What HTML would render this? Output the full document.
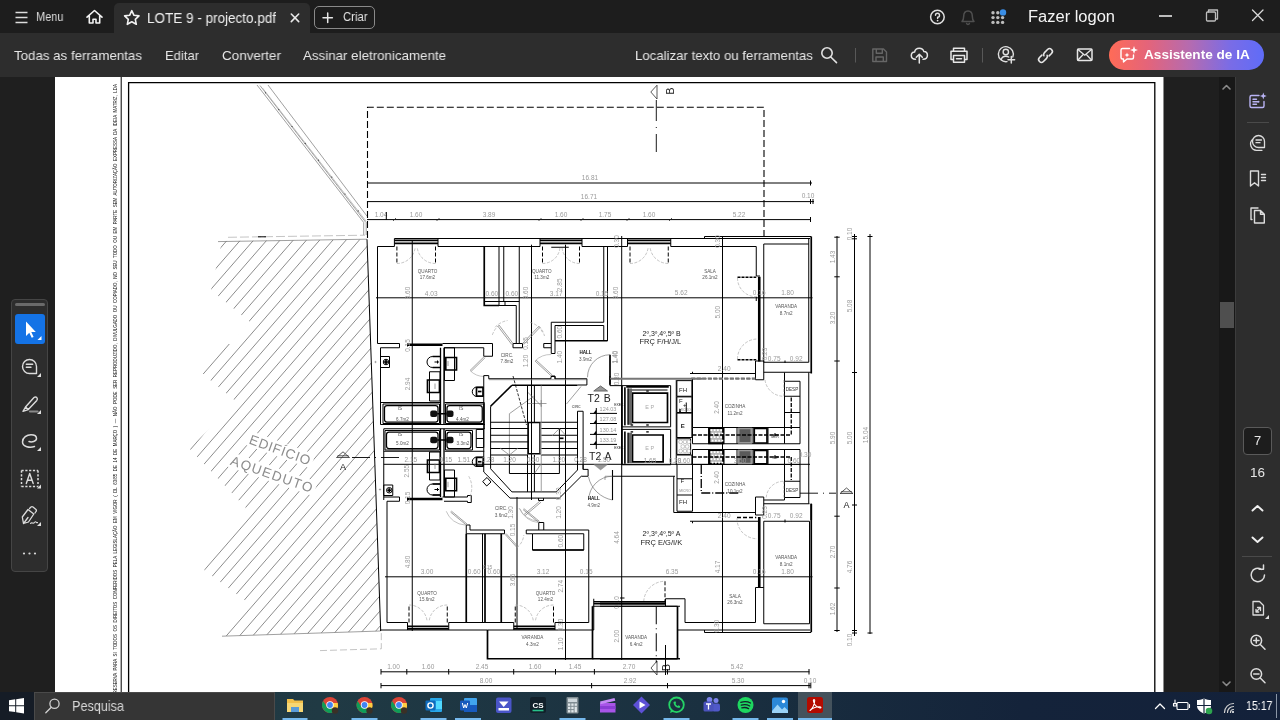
<!DOCTYPE html>
<html lang="pt">
<head>
<meta charset="utf-8">
<title>LOTE 9 - projecto.pdf</title>
<style>
html,body{margin:0;padding:0;width:1280px;height:720px;overflow:hidden;background:#1e1e1e;font-family:"Liberation Sans",sans-serif;}
#app{position:relative;width:1280px;height:720px;overflow:hidden;}
.abs{position:absolute;}
#titlebar{left:0;top:0;width:1280px;height:33px;background:#1d1d1d;}
#tab{left:114px;top:3px;width:196px;height:30px;background:#2d2d2d;border-radius:5px 5px 0 0;}
#toolbar{left:0;top:33px;width:1280px;height:44px;background:#2d2d2d;}
.t{position:absolute;white-space:nowrap;color:#e6e6e6;line-height:1;will-change:transform;}
#content{left:0;top:77px;width:1280px;height:615px;background:#1f1f1f;}
#page{left:55px;top:77px;width:1108px;height:615px;background:#fff;border-right:1px solid #8a8a8a;}
#sbtrack{left:1219px;top:77px;width:16px;height:615px;background:#181818;}
#sbthumb{left:1220px;top:302px;width:14px;height:26px;background:#4f4f4f;}
#rpanel{left:1235px;top:77px;width:45px;height:615px;background:#2d2d2d;border-left:1px solid #3c3c3c;box-sizing:border-box;}
#ltools{left:11px;top:299px;width:37px;height:273px;background:#2d2d2d;border:1px solid #454545;border-radius:4px;box-sizing:border-box;}
#taskbar{left:0;top:692px;width:1280px;height:28px;background:linear-gradient(90deg,#22343c 0,#203a44 25%,#1a3040 55%,#14233a 80%,#13213a 100%);}
#start{left:0;top:692px;width:34px;height:28px;background:#151c26;}
#search{left:34px;top:692px;width:241px;height:28px;background:#353535;border:1px solid #4a4a4a;border-bottom:none;box-sizing:border-box;}
svg{position:absolute;left:0;top:0;overflow:visible;will-change:transform;}
</style>
</head>
<body>
<div id="app">
<div id="content" class="abs"></div>
<div id="page" class="abs"></div>
<!--PLAN-->
<svg width="1280" height="720" viewBox="0 0 1280 720" style="font-family:'Liberation Sans',sans-serif">
<style>
path,circle,rect,ellipse{vector-effect:non-scaling-stroke}
.sk{stroke:#000;stroke-width:1.7;fill:none}
.sx{stroke:#000;stroke-width:2.6;fill:none}
.sm{stroke:#000;stroke-width:1;fill:none}
.st{stroke:#222;stroke-width:.75;fill:none}
.sg{stroke:#777;stroke-width:.7;fill:none}
.slg{stroke:#aaa;stroke-width:.7;fill:none}
.sh{stroke:#666;stroke-width:.75;fill:none}
.sd{fill:#9a9a9a;font-size:6.5px}
.sr{fill:#555;font-size:4.6px}
.sb{fill:#222;font-size:9px}
</style>
<defs><clipPath id="pg"><rect x="55" y="77" width="1108" height="615"/></clipPath>
<clipPath id="hc"><path d="M222 241 L211 290 L250 322 L204 375 L238 403 L189 448 L246 508 L204 570 L246 601 L222 636 L380.4 631 L367 239.5Z"/></clipPath></defs>
<g clip-path="url(#pg)">
<path class="sm" d="M121.2 77L121.2 692" />
<path class="sm" d="M128.6 692V82.6H1154.8V692" style="stroke-width:1.3"/>
<text x="117.3" y="731.2" transform="rotate(-90 117.3 731.2)" font-size="4.5" fill="#111" word-spacing="1.4" textLength="647.2" lengthAdjust="spacing">A IDEIA MATRIZ RESERVA PARA SI TODOS OS DIREITOS CONFERIDOS PELA LEGISLAÇÃO EM VIGOR ( DL 63/85 DE 14 DE MARÇO ) — NÃO PODE SER REPRODUZIDO, DIVULGADO OU COPIADO, NO SEU TODO OU EM PARTE SEM AUTORIZAÇÃO EXPRESSA DA IDEIA MATRIZ, LDA</text>
<path class="sg" d="M257 85L363.7 222.5V235" />
<path class="sg" d="M260 85.5L365.5 222" />
<path class="slg" d="M262.5 88L366 221" />
<path class="sg" d="M268 85L367.3 216.5" />
<path class="sg" d="M366.2 222V235" />
<circle cx="265.5" cy="92.8" r=".6" fill="#333"/>
<circle cx="278.8" cy="109.6" r=".6" fill="#333"/>
<circle cx="292.0" cy="126.5" r=".6" fill="#333"/>
<circle cx="305.2" cy="143.4" r=".6" fill="#333"/>
<circle cx="318.5" cy="160.2" r=".6" fill="#333"/>
<circle cx="331.8" cy="177.1" r=".6" fill="#333"/>
<circle cx="345.0" cy="194.0" r=".6" fill="#333"/>
<circle cx="358.2" cy="210.9" r=".6" fill="#333"/>
<path class="sm" d="M367.5 238V107.3H764V237" stroke-dasharray="7 3" style="stroke-width:1.1"/>
<path class="st" d="M657 85.2L650.8 92L657 99Z" />
<text class="sb" x="674" y="91" text-anchor="middle" transform="rotate(-90 674 91)" style="font-size:11px">B</text>
<path class="sm" d="M656.3 100V152" stroke-dasharray="21 6 1 6" style="stroke-width:.9"/>
<g clip-path="url(#hc)">
<path class="sh" d="M177.9 221L-239.5 701" />
<path class="sh" d="M191.1 221L-226.3 701" />
<path class="sh" d="M204.3 221L-213.1 701" />
<path class="sh" d="M217.5 221L-199.9 701" />
<path class="sh" d="M230.7 221L-186.7 701" />
<path class="sh" d="M243.9 221L-173.5 701" />
<path class="sh" d="M257.1 221L-160.3 701" />
<path class="sh" d="M270.3 221L-147.1 701" />
<path class="sh" d="M283.5 221L-133.9 701" />
<path class="sh" d="M296.7 221L-120.7 701" />
<path class="sh" d="M309.9 221L-107.5 701" />
<path class="sh" d="M323.1 221L-94.3 701" />
<path class="sh" d="M336.3 221L-81.1 701" />
<path class="sh" d="M349.5 221L-67.9 701" />
<path class="sh" d="M362.7 221L-54.7 701" />
<path class="sh" d="M375.9 221L-41.5 701" />
<path class="sh" d="M389.1 221L-28.3 701" />
<path class="sh" d="M402.3 221L-15.1 701" />
<path class="sh" d="M415.5 221L-1.9 701" />
<path class="sh" d="M428.7 221L11.3 701" />
<path class="sh" d="M441.9 221L24.5 701" />
<path class="sh" d="M455.1 221L37.7 701" />
<path class="sh" d="M468.3 221L50.9 701" />
<path class="sh" d="M481.5 221L64.1 701" />
<path class="sh" d="M494.7 221L77.3 701" />
<path class="sh" d="M507.9 221L90.5 701" />
<path class="sh" d="M521.1 221L103.7 701" />
<path class="sh" d="M534.3 221L116.9 701" />
<path class="sh" d="M547.5 221L130.1 701" />
<path class="sh" d="M560.7 221L143.3 701" />
<path class="sh" d="M573.9 221L156.5 701" />
<path class="sh" d="M587.1 221L169.7 701" />
<path class="sh" d="M600.3 221L182.9 701" />
<path class="sh" d="M613.5 221L196.1 701" />
<path class="sh" d="M626.7 221L209.3 701" />
<path class="sh" d="M639.9 221L222.5 701" />
<path class="sh" d="M653.1 221L235.7 701" />
<path class="sh" d="M666.3 221L248.9 701" />
<path class="sh" d="M679.5 221L262.1 701" />
<path class="sh" d="M692.7 221L275.3 701" />
<path class="sh" d="M705.9 221L288.5 701" />
<path class="sh" d="M719.1 221L301.7 701" />
<path class="sh" d="M732.3 221L314.9 701" />
<path class="sh" d="M745.5 221L328.1 701" />
<path class="sh" d="M758.7 221L341.3 701" />
<path class="sh" d="M771.9 221L354.5 701" />
<path class="sh" d="M785.1 221L367.7 701" />
<path class="sh" d="M798.3 221L380.9 701" />
<path class="sh" d="M811.5 221L394.1 701" />
<path class="sh" d="M824.7 221L407.3 701" />
<path class="sh" d="M837.9 221L420.5 701" />
<path class="sh" d="M851.1 221L433.7 701" />
<path class="sh" d="M864.3 221L446.9 701" />
<path class="sh" d="M877.5 221L460.1 701" />
<path class="sh" d="M890.7 221L473.3 701" />
</g>
<path class="sh" d="M229.3 344L203.2 374" />
<path class="sg" d="M218 241.6L367 239.2" />
<path class="slg" d="M228 237.3L365 235.2" stroke-dasharray="9 3"/>
<path class="sm" d="M258 236.8h8" />
<path class="sg" d="M222 636.2L380.5 631" />
<path class="slg" d="M320 650.6L381.3 648.8V631" stroke-dasharray="7 3"/>
<g transform="rotate(20 248.2 443.3)"><rect x="245.2" y="430.8" width="70" height="15" fill="#fff"/><text x="248.2" y="443.3" font-size="13.5" fill="#8c8c8c" letter-spacing=".8">EDIFÍCIO</text></g>
<g transform="rotate(19.1 229.6 464.6)"><rect x="226.6" y="452.1" width="92" height="15" fill="#fff"/><text x="229.6" y="464.6" font-size="13.5" fill="#8c8c8c" letter-spacing="1.35">AQUEDUTO</text></g>
<path class="sm" d="M367 239.3L380.7 631" />
<path class="st" d="M336.5 457.5L343 451.8L349.5 457.5Z M337.5 455.8h11" />
<text class="sb" x="343" y="469.5" text-anchor="middle" >A</text>
<path class="sm" d="M352 457.5H404" stroke-dasharray="18 5 1 5" style="stroke-width:.9"/>
<path class="sm" d="M367 183L812 183" />
<path class="sm" d="M367 201.6L814 201.6" />
<path class="sm" d="M367 219.6L811 219.6" />
<text class="sd" x="590" y="180" text-anchor="middle" >16.81</text>
<text class="sd" x="589" y="198.5" text-anchor="middle" >16.71</text>
<text class="sd" x="808" y="198" text-anchor="middle" >0.10</text>
<text class="sd" x="381" y="217" text-anchor="middle" >1.04</text>
<text class="sd" x="416" y="217" text-anchor="middle" >1.60</text>
<text class="sd" x="489" y="217" text-anchor="middle" >3.89</text>
<text class="sd" x="561" y="217" text-anchor="middle" >1.60</text>
<text class="sd" x="605" y="217" text-anchor="middle" >1.75</text>
<text class="sd" x="649" y="217" text-anchor="middle" >1.60</text>
<text class="sd" x="739" y="217" text-anchor="middle" >5.22</text>
<path class="st" d="M393.0 221L396.0 218" />
<path class="st" d="M436.5 221L439.5 218" />
<path class="st" d="M538.5 221L541.5 218" />
<path class="st" d="M580.5 221L583.5 218" />
<path class="st" d="M626.5 221L629.5 218" />
<path class="st" d="M669.0 221L672.0 218" />
<path class="sm" d="M386.3 212L386.3 220" />
<path class="sm" d="M810.5 180.5v5M810.5 199v5M810.5 217v5" />
<path class="sm" d="M813 199v5" />
<path class="sm" d="M381 671.8L809.5 671.8" />
<path class="sm" d="M381 685.6L810.5 685.6" />
<path class="sm" d="M381 669L381 674.5" />
<path class="sm" d="M406.8 669L406.8 674.5" />
<path class="sm" d="M448.7 669L448.7 674.5" />
<path class="sm" d="M513.7 669L513.7 674.5" />
<path class="sm" d="M555.5 669L555.5 674.5" />
<path class="sm" d="M594.4 669L594.4 674.5" />
<path class="sm" d="M667.5 669L667.5 674.5" />
<path class="sm" d="M809 669L809 674.5" />
<path class="sm" d="M381 683L381 688.3" />
<path class="sm" d="M591.6 683L591.6 688.3" />
<path class="sm" d="M667.5 683L667.5 688.3" />
<path class="sm" d="M809 683L809 688.3" />
<path class="sm" d="M810.8 683L810.8 688.3" />
<text class="sd" x="393.5" y="669" text-anchor="middle" >1.00</text>
<text class="sd" x="428" y="669" text-anchor="middle" >1.60</text>
<text class="sd" x="482" y="669" text-anchor="middle" >2.45</text>
<text class="sd" x="535" y="669" text-anchor="middle" >1.60</text>
<text class="sd" x="575" y="669" text-anchor="middle" >1.45</text>
<text class="sd" x="629" y="669" text-anchor="middle" >2.70</text>
<text class="sd" x="737" y="669" text-anchor="middle" >5.42</text>
<text class="sd" x="486" y="683" text-anchor="middle" >8.00</text>
<text class="sd" x="630" y="683" text-anchor="middle" >2.92</text>
<text class="sd" x="738" y="683" text-anchor="middle" >5.30</text>
<text class="sd" x="810" y="683" text-anchor="middle" >0.10</text>
<path class="st" d="M897.5 0" />
<path class="st" d="M657 661L651 668L657 675Z" />
<text class="sb" x="670" y="667.5" text-anchor="middle" transform="rotate(-90 670 667.5)" style="font-size:11px">B</text>
<path class="sm" d="M837 236L837 632" />
<path class="sm" d="M854.5 234L854.5 636" />
<path class="sm" d="M870 234L870 634" />
<path class="sm" d="M834.3 237.2L839.7 237.2" />
<path class="sm" d="M834.3 276.8L839.7 276.8" />
<path class="sm" d="M834.3 361L839.7 361" />
<path class="sm" d="M834.3 516.2L839.7 516.2" />
<path class="sm" d="M834.3 588L839.7 588" />
<path class="sm" d="M834.3 630.5L839.7 630.5" />
<path class="sm" d="M852 236.5L857 236.5" />
<path class="sm" d="M852 238.8L857 238.8" />
<path class="sm" d="M852 372.5L857 372.5" />
<path class="sm" d="M852 505L857 505" />
<path class="sm" d="M852 630.5L857 630.5" />
<path class="sm" d="M852 633L857 633" />
<path class="sm" d="M867.5 236.5L872.5 236.5" />
<path class="sm" d="M867.5 633L872.5 633" />
<text class="sd" x="834.5" y="257" text-anchor="middle" transform="rotate(-90 834.5 257)" >1.43</text>
<text class="sd" x="834.5" y="318" text-anchor="middle" transform="rotate(-90 834.5 318)" >3.20</text>
<text class="sd" x="834.5" y="438" text-anchor="middle" transform="rotate(-90 834.5 438)" >5.90</text>
<text class="sd" x="834.5" y="552" text-anchor="middle" transform="rotate(-90 834.5 552)" >2.70</text>
<text class="sd" x="834.5" y="609" text-anchor="middle" transform="rotate(-90 834.5 609)" >1.62</text>
<text class="sd" x="852" y="306" text-anchor="middle" transform="rotate(-90 852 306)" >5.08</text>
<text class="sd" x="852" y="438" text-anchor="middle" transform="rotate(-90 852 438)" >5.00</text>
<text class="sd" x="852" y="567" text-anchor="middle" transform="rotate(-90 852 567)" >4.76</text>
<text class="sd" x="852" y="234" text-anchor="middle" transform="rotate(-90 852 234)" >0.10</text>
<text class="sd" x="852" y="640" text-anchor="middle" transform="rotate(-90 852 640)" >0.10</text>
<text class="sd" x="867.5" y="435" text-anchor="middle" transform="rotate(-90 867.5 435)" >15.04</text>
<path class="st" d="M840 493.5L846.5 488L853 493.5Z M841 491.8h11" />
<text class="sb" x="846.5" y="508" text-anchor="middle" >A</text>
<path class="sm" d="M800 493.2H836" stroke-dasharray="18 5 1 5" style="stroke-width:.9"/>
<path class="sm" d="M394.4 238.5L810 238.5" />
<path class="sm" d="M377.5 246.5L394.4 246.5" />
<path class="sm" d="M438 246.5L540 246.5" />
<path class="sm" d="M582 246.5L627.5 246.5" />
<path class="sm" d="M670.75 246.5L756.25 246.5" />
<path class="sm" d="M394.4 238.5V246.5M438 238.5V246.5" />
<path class="sk" d="M394.4 240.4L438 240.4" />
<path class="sk" d="M394.4 243.4L438 243.4" />
<path class="sm" d="M396.9 246.5V263.5M435.5 246.5V263.5" stroke-dasharray="4 2"/>
<path class="slg" d="M396.9 263.5A18.30000000000001 18.30000000000001 0 0 0 415.2 247.5M435.5 263.5A18.30000000000001 18.30000000000001 0 0 1 417.2 247.5" stroke-dasharray="3 1.5"/>
<path class="sm" d="M540 238.5V246.5M582 238.5V246.5" />
<path class="sk" d="M540 240.4L582 240.4" />
<path class="sk" d="M540 243.4L582 243.4" />
<path class="sm" d="M542.5 246.5V263.5M579.5 246.5V263.5" stroke-dasharray="4 2"/>
<path class="slg" d="M542.5 263.5A17.5 17.5 0 0 0 560.0 247.5M579.5 263.5A17.5 17.5 0 0 1 562.0 247.5" stroke-dasharray="3 1.5"/>
<path class="sm" d="M627.5 238.5V246.5M670.75 238.5V246.5" />
<path class="sk" d="M627.5 240.4L670.75 240.4" />
<path class="sk" d="M627.5 243.4L670.75 243.4" />
<path class="sm" d="M630.0 246.5V263.5M668.25 246.5V263.5" stroke-dasharray="4 2"/>
<path class="slg" d="M630.0 263.5A18.125 18.125 0 0 0 648.125 247.5M668.25 263.5A18.125 18.125 0 0 1 650.125 247.5" stroke-dasharray="3 1.5"/>
<path class="sm" d="M376 297.8L812.5 297.8" />
<path class="sm" d="M383.7 464.3L810 464.3" />
<path class="sm" d="M385 576.8L812.5 576.8" />
<path class="sm" d="M412.25 241L412.25 631" />
<path class="sm" d="M531.5 244.7L531.5 500" />
<path class="sm" d="M517 497L517 629" />
<path class="sm" d="M565.5 244.7L565.5 660" />
<path class="sm" d="M621.7 236L621.7 660" />
<path class="sm" d="M722.5 236.5L722.5 632.5" />
<g transform="translate(360 226) scale(0.25)">
<path class="sm" d="M70 82V470H158V487H82V720" />
<path class="sx" d="M190 475H330" />
<path class="sm" d="M190 470V482" />
<path class="sm" d="M330 470H530V521H495V487H336" />
<path class="sk" d="M497 82V318H556" />
<path class="sm" d="M497 302H556M556 82V318H580V302H556M575 82V302M580 302H637M580 318H625V470M637 82V470" />
<path class="sm" d="M612 470H650V487H612Z" />
<path class="sm" d="M975 82V385H765V510H780V398H975V458M990 82V460" />
<path class="sk" d="M780 459H990" />
<path class="sm" d="M765 470H735V487H765" />
<path class="sm" d="M765 85H835" />
<path class="sm" d="M322 487V720M336 487V720" style="stroke-width:1.3"/>
<path class="sm" d="M82 522H118V566H82Z" />
<circle cx="104" cy="544" r="11" class="sm"/>
<path class="sk" d="M96 544H112M104 536V552" />
<circle cx="62" cy="544" r="2.5" class="sg"/>
<path class="sm" d="M320 522H290A22 22 0 0 0 290 566H320" />
<path class="sk" d="M290 522H320M290 566H320" />
<path class="sm" d="M298 544H316M310 538V550" />
<path class="sm" d="M278 583H320V700H278Z" />
<path class="sk" d="M270 616H318V666H270Z" />
<path class="sg" d="M300 630V652" />
<path class="sm" d="M338 487H378V618H338Z" />
<path class="sk" d="M343 526H386V576H343Z" />
<path class="sg" d="M352 540V560" />
<path class="sm" d="M493 644H468A18 18 0 0 0 468 682H493" />
<path class="sk" d="M466 646H492V680H466Z" />
<path class="sk" d="M472 662H486" />
<path class="sg" d="M612 470L556 396M607 474L551 400" />
<path class="slg" d="M556 396A92 92 0 0 0 528 440" stroke-dasharray="3 1.5"/>
<path class="slg" d="M540 405A92 92 0 0 1 590 378" stroke-dasharray="3 1.5"/>
<path class="sg" d="M650 470L716 400M655 474L721 404" />
<path class="slg" d="M716 400A92 92 0 0 1 738 440" stroke-dasharray="3 1.5"/>
<path class="slg" d="M680 385A80 80 0 0 1 730 425" stroke-dasharray="3 1.5"/>
<path class="sg" d="M497 522L440 578M501 526L444 582" />
<path class="slg" d="M440 578A80 80 0 0 0 497 602" />
<path class="sg" d="M765 600L700 540M769 596L704 536" />
<path class="slg" d="M700 540A88 88 0 0 1 765 514" />
<path class="sm" d="M765 600H780V612" />
<path class="sk" d="M1000 515V635" />
<path class="sg" d="M1000 515A90 90 0 0 0 910 605" />
<path d="M935 660L962 640L990 660Z" fill="#999" stroke="#666" stroke-width="1"/>
</g>
<text class="sr" x="427.5" y="272.8" text-anchor="middle" >QUARTO</text>
<text class="sr" x="427.5" y="279.2" text-anchor="middle" >17.6m2</text>
<text class="sr" x="541.8" y="272.8" text-anchor="middle" >QUARTO</text>
<text class="sr" x="541.8" y="279.2" text-anchor="middle" >11.3m2</text>
<text class="sd" x="431.2" y="295.5" text-anchor="middle" >4.03</text>
<text class="sd" x="491.8" y="295.5" text-anchor="middle" >0.60</text>
<text class="sd" x="511.8" y="295.5" text-anchor="middle" >0.60</text>
<text class="sd" x="556.2" y="295.5" text-anchor="middle" >3.17</text>
<text class="sd" x="602.0" y="295.5" text-anchor="middle" >0.15</text>
<text class="sd" x="409.5" y="293.0" text-anchor="middle" transform="rotate(-90 409.5 293.0)" >3.60</text>
<text class="sd" x="562.5" y="284.8" text-anchor="middle" transform="rotate(-90 562.5 284.8)" >2.85</text>
<text class="sd" x="617.5" y="293.0" text-anchor="middle" transform="rotate(-90 617.5 293.0)" >3.60</text>
<text class="sd" x="528.0" y="293.0" text-anchor="middle" transform="rotate(-90 528.0 293.0)" >3.60</text>
<text class="sd" x="562.0" y="332.2" text-anchor="middle" transform="rotate(-90 562.0 332.2)" >0.60</text>
<text class="sd" x="562.0" y="357.2" text-anchor="middle" transform="rotate(-90 562.0 357.2)" >1.40</text>
<text class="sd" x="617.5" y="357.2" text-anchor="middle" transform="rotate(-90 617.5 357.2)" >1.40</text>
<text class="sd" x="528.0" y="361.0" text-anchor="middle" transform="rotate(-90 528.0 361.0)" >1.20</text>
<text class="sd" x="409.5" y="384.0" text-anchor="middle" transform="rotate(-90 409.5 384.0)" >2.94</text>
<text class="sd" x="528.0" y="343.5" text-anchor="middle" transform="rotate(-90 528.0 343.5)" >0.15</text>
<text class="sd" x="409.5" y="345.5" text-anchor="middle" transform="rotate(-90 409.5 345.5)" >0.15</text>
<text class="sr" x="507.0" y="356.5" text-anchor="middle" >CIRC.</text>
<text class="sr" x="507.0" y="363.0" text-anchor="middle" >7.8m2</text>
<text class="sr" x="585.5" y="354.2" text-anchor="middle" transform="rotate( 585.5 354.2)" style="fill:#111;font-weight:bold">HALL</text>
<text class="sr" x="585.5" y="361.0" text-anchor="middle" >3.9m2</text>
<text class="sb" x="599.2" y="401.5" text-anchor="middle" style="font-size:10.5px;word-spacing:1px">T2 B</text>
<text class="sb" x="642.5" y="336.0" text-anchor="start" style="font-size:7px">2º,3º,4º,5º B</text>
<text class="sb" x="639.5" y="343.5" text-anchor="start" style="font-size:7.5px">FRÇ F/H/J/L</text>
<g transform="translate(600 226) scale(0.25)">
<path class="sm" d="M418 50V42H845" />
<path class="sk" d="M845 42V590" />
<path class="sm" d="M835 50V72M835 72V545" />
<path class="sm" d="M625 82V200H640" />
<path class="sx" d="M637 203V542" />
<path class="sm" d="M655 72V545M655 72H835M655 545H835M655 585H845" />
<path class="sm" d="M622 540H655V615H622Z" />
<path class="sm" d="M360 590H622" />
<path class="sm" d="M370 583V590" />
<path class="sm" d="M40 610H365" />
<path class="sg" d="M365 610H622" stroke-dasharray="4 1.5" style="stroke-width:1.8;stroke:#666"/>
<path class="sm" d="M40 600V612" />
<path class="sk" d="M550 205H625" stroke-dasharray="3 1"/>
<path class="slg" d="M550 208A75 75 0 0 0 625 283" stroke-dasharray="3 1.5"/>
<path class="sk" d="M550 535H625" stroke-dasharray="3 1"/>
<path class="slg" d="M550 532A80 80 0 0 1 630 452" stroke-dasharray="3 1.5"/>
<path class="sm" d="M740 538V548" />
<path class="sm" d="M625 283V300" />
</g>
<text class="sr" x="710.0" y="272.8" text-anchor="middle" >SALA</text>
<text class="sr" x="710.0" y="279.2" text-anchor="middle" >26.1m2</text>
<text class="sr" x="786.2" y="308.0" text-anchor="middle" >VARANDA</text>
<text class="sr" x="786.2" y="314.5" text-anchor="middle" >8.7m2</text>
<text class="sd" x="681.2" y="295.0" text-anchor="middle" >5.62</text>
<text class="sd" x="759.2" y="295.0" text-anchor="middle" >0.16</text>
<text class="sd" x="787.5" y="295.0" text-anchor="middle" >1.80</text>
<text class="sd" x="724.2" y="370.8" text-anchor="middle" >2.40</text>
<text class="sd" x="774.2" y="360.5" text-anchor="middle" >0.75</text>
<text class="sd" x="796.2" y="360.5" text-anchor="middle" >0.92</text>
<text class="sd" x="720.5" y="312.2" text-anchor="middle" transform="rotate(-90 720.5 312.2)" >5.00</text>
<text class="sd" x="618.5" y="241.5" text-anchor="middle" transform="rotate(-90 618.5 241.5)" >0.30</text>
<text class="sd" x="720.0" y="241.5" text-anchor="middle" transform="rotate(-90 720.0 241.5)" >0.30</text>
<text class="sd" x="618.5" y="357.2" text-anchor="middle" transform="rotate(-90 618.5 357.2)" >1.40</text>
<text class="sd" x="618.5" y="379.0" text-anchor="middle" transform="rotate(-90 618.5 379.0)" >0.30</text>
<text class="sd" x="767.0" y="354.0" text-anchor="middle" transform="rotate(-90 767.0 354.0)" >0.23</text>
<g transform="translate(360 340) scale(0.25)">
<path class="sm" d="M82 264V338M82 250H322M338 250H497" />
<path class="sm" d="M92 256H318V334H92Z" />
<rect x="98" y="262" width="214" height="66" rx="10" class="sm" style="stroke-width:1.25"/>
<path class="sm" d="M342 256H495V334H342Z" />
<rect x="348" y="262" width="141" height="66" rx="10" class="sm" style="stroke-width:1.25"/>
<path class="sm" d="M322 264V338M336 264V338" style="stroke-width:1.3"/>
<rect x="281" y="282" width="28" height="26" rx="8" fill="#111"/>
<rect x="346" y="282" width="28" height="26" rx="8" fill="#111"/>
<rect x="281" y="387" width="28" height="26" rx="8" fill="#111"/>
<rect x="346" y="387" width="28" height="26" rx="8" fill="#111"/>
<path class="sk" d="M309 295H346M309 400H346" />
<path class="sm" d="M82 338H500M95 355H500" />
<path class="sm" d="M497 250V355" />
<path class="sm" d="M95 355V640" />
<path class="sm" d="M100 362H318V440H100Z" />
<rect x="106" y="368" width="206" height="66" rx="10" class="sm" style="stroke-width:1.25"/>
<path class="sm" d="M342 362H450V440H342Z" />
<rect x="348" y="368" width="96" height="66" rx="10" class="sm" style="stroke-width:1.25"/>
<path class="sm" d="M322 355V628M336 355V628" style="stroke-width:1.3"/>
<path class="sm" d="M465 358H495V430H465Z" />
<path class="sm" d="M465 394H495" />
<path class="sm" d="M95 445H322M338 445H497" />
<path class="sm" d="M278 448H320V560H278Z" />
<path class="sk" d="M270 480H318V530H270Z" />
<path class="sg" d="M300 494V516" />
<path class="sm" d="M320 576H290A22 22 0 0 0 290 620H320" />
<path class="sk" d="M290 576H320M290 620H320" />
<path class="sm" d="M298 598H316M310 592V604" />
<path class="sm" d="M95 580H131V622H95Z" />
<circle cx="117" cy="601" r="11" class="sm"/>
<path class="sk" d="M109 601H125M117 593V609" />
<circle cx="80" cy="598" r="2.5" class="sg"/>
<path class="sm" d="M338 520H378V628H338Z" />
<path class="sk" d="M343 553H386V603H343Z" />
<path class="sg" d="M352 567V589" />
<path class="sm" d="M493 468H468A18 18 0 0 0 468 506H493" />
<path class="sk" d="M466 470H492V504H466Z" />
<path class="sk" d="M472 487H486" />
<path class="sm" d="M95 628H158V645H108V720" />
<path class="sx" d="M190 636H330" />
<path class="sm" d="M190 630V643" />
<path class="sm" d="M330 628H430V622H445V650H430V645H336" />
<path class="slg" d="M435 545A90 90 0 0 1 440 625" stroke-dasharray="3 1.5"/>
<path class="sg" d="M1010 545A95 95 0 0 0 915 640" />
</g>
<path class="sm" d="M483.75 406V375.6H488.75V378.75H551V376.5H555V378.75H586.9V385H577.5" />
<path class="sg" d="M488.75 379.7L586 379.7" />
<path class="sk" d="M511.9 385.25H577.5" />
<path class="sk" d="M511.9 385.25L490.6 406.25" />
<path class="sg" d="M581 386.5L566.5 404" />
<path class="sm" d="M483.75 406V472L510 498.1H559.4L581.25 476.25H588.1V469.4H583.1V464.3" />
<path class="sm" d="M490.6 406.25V468.75L511.9 491.9H556.25L577.5 470V411.25" />
<path class="sm" d="M482.7 481.5L487 477.5L491 482L486.7 486Z" />
<path class="sm" d="M577.5 411.25H583.1V469.4" />
<path class="sg" d="M533.7 396.2L509.4 413.7V455" />
<path class="sg" d="M527.5 392L541 405.5" />
<path class="sg" d="M527.5 403.5H546.5M541.2 400V407" />
<path class="sm" d="M527.5 385.25V422.5M534.4 385.25V422.5" />
<path class="sg" d="M541.25 385.25V422.5" />
<path class="sm" d="M527.5 455V491.9M534.4 455V491.9" />
<path class="sg" d="M541.25 455V491.9" />
<path class="sg" d="M534.4 473.5L541 464" />
<path class="sm" d="M490.6 422.25L528 422.25" />
<path class="sm" d="M541.25 422.25L577.5 422.25" />
<path class="sm" d="M490.6 428.5L528 428.5" />
<path class="sm" d="M541.25 428.5L577.5 428.5" />
<path class="sm" d="M490.6 435.25L528 435.25" />
<path class="sm" d="M541.25 435.25L577.5 435.25" />
<path class="sm" d="M490.6 441.9L528 441.9" />
<path class="sm" d="M541.25 441.9L577.5 441.9" />
<path class="sm" d="M490.6 448.5L528 448.5" />
<path class="sm" d="M541.25 448.5L577.5 448.5" />
<path class="sm" d="M490.6 455L528 455" />
<path class="sm" d="M541.25 455L577.5 455" />
<path class="sk" d="M528.1 422.5H540V453.75H528.1Z" />
<path class="sg" d="M540.6 422.5V453.75" style="stroke-width:1.6"/>
<path class="sm" d="M509.4 455V473.5H559.4V428.5" />
<path class="sg" d="M552 436L559.4 428.5L565 434.5" />
<path class="sg" d="M500 448L509.4 455L518 448" />
<path class="sk" d="M559 438.3H563.5" />
<path class="sm" d="M513 376L526.5 425" stroke-dasharray="3 1.5" style="stroke-width:.8"/>
<path class="sm" d="M590 413.4L617 413.4" />
<path d="M596.3 413.4L593 413.7L596.3 409.4Z" fill="#000"/>
<path class="sm" d="M590 423.5L617 423.5" />
<path d="M596.3 423.5L593 423.8L596.3 419.5Z" fill="#000"/>
<path class="sm" d="M590 434.4L617 434.4" />
<path d="M596.3 434.4L593 434.7L596.3 430.4Z" fill="#000"/>
<path class="sm" d="M590 444.4L617 444.4" />
<path d="M596.3 444.4L593 444.7L596.3 440.4Z" fill="#000"/>
<path class="sm" d="M596.3 408L596.3 449" />
<text class="sd" x="608" y="411.3" text-anchor="middle" style="font-size:5.5px">124.03</text>
<text class="sd" x="608" y="421.4" text-anchor="middle" style="font-size:5.5px">127.08</text>
<text class="sd" x="608" y="432.3" text-anchor="middle" style="font-size:5.5px">130.14</text>
<text class="sd" x="608" y="442.3" text-anchor="middle" style="font-size:5.5px">133.19</text>
<path d="M593.75 464.6H607.5L600.6 470Z" fill="#999" stroke="#666" stroke-width=".3"/>
<text class="sb" x="600.3" y="460.3" text-anchor="middle" style="font-size:10.5px;word-spacing:1px">T2 A</text>
<path class="sg" d="M612.5 470V500" style="stroke-width:1.2"/>
<path class="sg" d="M612.5 500A30 30 0 0 1 588.5 477" />
<path class="sm" d="M612.5 470V476.25H621.7" />
<path class="sg" d="M540 501L524 514.5M541 502.2L525 515.7" />
<path class="slg" d="M519 508A22 22 0 0 0 539 521" />
<path class="sm" d="M538.5 498.1V500.5H543.5V498.1" />
<text class="sr" x="400.0" y="409.5" text-anchor="middle" >IS</text>
<text class="sr" x="402.5" y="420.5" text-anchor="middle" >6.7m2</text>
<text class="sr" x="461.2" y="409.5" text-anchor="middle" >IS</text>
<text class="sr" x="462.5" y="420.5" text-anchor="middle" >4.4m2</text>
<text class="sr" x="400.0" y="435.8" text-anchor="middle" >IS</text>
<text class="sr" x="402.5" y="445.0" text-anchor="middle" >5.0m2</text>
<text class="sr" x="461.2" y="435.8" text-anchor="middle" >IS</text>
<text class="sr" x="463.0" y="445.0" text-anchor="middle" >3.3m2</text>
<text class="sd" x="409.5" y="471.2" text-anchor="middle" transform="rotate(-90 409.5 471.2)" >2.55</text>
<text class="sd" x="409.5" y="498.0" text-anchor="middle" transform="rotate(-90 409.5 498.0)" >0.15</text>
<text class="sd" x="410.8" y="462.2" text-anchor="middle" >2.15</text>
<text class="sd" x="445.8" y="462.2" text-anchor="middle" >0.15</text>
<text class="sd" x="463.8" y="462.2" text-anchor="middle" >1.51</text>
<text class="sd" x="488.0" y="462.2" text-anchor="middle" >0.28</text>
<text class="sd" x="509.5" y="462.2" text-anchor="middle" >1.20</text>
<text class="sd" x="533.0" y="462.2" text-anchor="middle" >0.50</text>
<text class="sd" x="558.8" y="462.2" text-anchor="middle" >1.20</text>
<text class="sd" x="580.5" y="462.2" text-anchor="middle" >0.28</text>
<text class="sd" x="603.8" y="462.2" text-anchor="middle" >1.50</text>
<text class="sr" x="576.2" y="407.5" text-anchor="middle" transform="rotate( 576.2 407.5)" style="font-size:3.6px;fill:#111">CIRC</text>
<text class="sr" x="593.8" y="500.0" text-anchor="middle" transform="rotate( 593.8 500.0)" style="fill:#111;font-weight:bold">HALL</text>
<text class="sr" x="593.8" y="507.0" text-anchor="middle" >4.9m2</text>
<text class="sr" x="501.2" y="509.5" text-anchor="middle" >CIRC.</text>
<text class="sr" x="501.2" y="516.5" text-anchor="middle" >3.6m2</text>
<text class="sd" x="513.0" y="512.5" text-anchor="middle" transform="rotate(-90 513.0 512.5)" >1.30</text>
<text class="sd" x="561.2" y="512.5" text-anchor="middle" transform="rotate(-90 561.2 512.5)" >1.20</text>
<text class="sd" x="561.2" y="493.8" text-anchor="middle" transform="rotate(-90 561.2 493.8)" >0.30</text>
<g transform="translate(610 375) scale(0.125)">
<path class="sg" d="M0 30H740" style="stroke-width:1.8"/>
<path class="sg" d="M740 30H1160" stroke-dasharray="4 1.5" style="stroke-width:1.6"/>
<path class="sm" d="M0 30V85H95" />
<path class="sm" d="M95 85H485V415H95Z" />
<path class="sm" d="M95 435H485V718H95Z" />
<path class="sk" d="M180 145H460V380H180Z" />
<path class="sk" d="M180 480H425V695H180Z" />
<path class="sk" d="M130 95H470" />
<path class="sm" d="M175 120H460" />
<rect x="112" y="98" width="14" height="305" fill="#111"/>
<rect x="140" y="108" width="36" height="290" fill="#666"/>
<rect x="140" y="108" width="10" height="290" fill="#111"/>
<rect x="112" y="452" width="14" height="258" fill="#111"/>
<rect x="140" y="462" width="36" height="243" fill="#666"/>
<rect x="140" y="462" width="10" height="243" fill="#111"/>
<path class="sk" d="M95 85V718" />
<rect x="290" y="122" width="20" height="12" fill="#222"/>
<rect x="165" y="394" width="20" height="12" fill="#222"/>
<rect x="290" y="394" width="20" height="12" fill="#222"/>
<rect x="165" y="449" width="20" height="12" fill="#222"/>
<rect x="290" y="449" width="20" height="12" fill="#222"/>
<path class="sm" d="M530 40V720" />
<path class="sm" d="M535 45H655V170H535ZM535 175H655V300H535ZM535 305H655V500H535ZM535 510H645V635H535ZM535 640H655V720" />
<path class="sm" d="M660 35V420" />
<circle cx="565" cy="535" r="15" class="slg"/>
<circle cx="600" cy="535" r="15" class="slg"/>
<circle cx="630" cy="535" r="15" class="slg"/>
<circle cx="582" cy="572" r="15" class="slg"/>
<circle cx="617" cy="572" r="15" class="slg"/>
<circle cx="565" cy="608" r="15" class="slg"/>
<circle cx="600" cy="608" r="15" class="slg"/>
<circle cx="630" cy="608" r="15" class="slg"/>
<path class="sk" d="M560 272V298" />
</g>
<text class="sd" x="649.8" y="409.4" text-anchor="middle" style="font-size:5.5px;fill:#aaa">E P</text>
<text class="sd" x="649.8" y="450.0" text-anchor="middle" style="font-size:5.5px;fill:#aaa">E P</text>
<text class="sb" x="679.0" y="391.9" text-anchor="start" style="font-size:6px">FH</text>
<text class="sb" x="679.0" y="402.8" text-anchor="start" style="font-size:6px">F</text>
<text class="sb" x="680.8" y="427.5" text-anchor="start" style="font-size:6px;font-weight:bold">E</text>
<text class="sb" x="684.8" y="407.2" text-anchor="middle" style="font-size:6px">+</text>
<text class="sr" x="685.0" y="411.0" text-anchor="middle" style="font-size:3.4px;fill:#888">MICRO</text>
<text class="sr" x="618.8" y="406.0" text-anchor="middle" style="font-size:3.4px;fill:#111">EXEC</text>
<text class="sr" x="618.8" y="448.8" text-anchor="middle" style="font-size:3.4px;fill:#111">EXEC</text>
<g transform="translate(600 340) scale(0.25)">
<path class="sm" d="M370 350H800V415H370Z" />
<path class="sm" d="M435 350V415" />
<path class="sm" d="M495 350V415" />
<path class="sm" d="M548 350V415" />
<path class="sm" d="M612 350V415" />
<path class="sm" d="M672 350V415" />
<path class="sm" d="M738 350V415" />
<rect x="437" y="352" width="56" height="61" fill="#bbb" stroke="#000" stroke-width="2.2" vector-effect="non-scaling-stroke"/>
<rect x="442" y="357" width="7" height="7" fill="#fff"/>
<rect x="447" y="371" width="7" height="7" fill="#fff"/>
<rect x="442" y="385" width="7" height="7" fill="#fff"/>
<rect x="447" y="399" width="7" height="7" fill="#fff"/>
<rect x="455" y="357" width="7" height="7" fill="#fff"/>
<rect x="460" y="371" width="7" height="7" fill="#fff"/>
<rect x="455" y="385" width="7" height="7" fill="#fff"/>
<rect x="460" y="399" width="7" height="7" fill="#fff"/>
<rect x="468" y="357" width="7" height="7" fill="#fff"/>
<rect x="473" y="371" width="7" height="7" fill="#fff"/>
<rect x="468" y="385" width="7" height="7" fill="#fff"/>
<rect x="473" y="399" width="7" height="7" fill="#fff"/>
<rect x="481" y="357" width="7" height="7" fill="#fff"/>
<rect x="486" y="371" width="7" height="7" fill="#fff"/>
<rect x="481" y="385" width="7" height="7" fill="#fff"/>
<rect x="486" y="399" width="7" height="7" fill="#fff"/>
<rect x="555" y="354" width="50" height="57" fill="#5a5a5a" stroke="#999" stroke-width="1.5"/>
<path class="sk" d="M617 354H668V412H617Z" />
<path class="sm" d="M370 380H765" stroke-dasharray="4 1.5" style="stroke-width:1.3"/>
<path class="sm" d="M700 372V386M693 380H712" />
<path class="sm" d="M370 438H800V498H370Z" />
<path class="sm" d="M435 438V498" />
<path class="sm" d="M495 438V498" />
<path class="sm" d="M548 438V498" />
<path class="sm" d="M612 438V498" />
<path class="sm" d="M672 438V498" />
<path class="sm" d="M738 438V498" />
<rect x="437" y="440" width="56" height="56" fill="#bbb" stroke="#000" stroke-width="2.2" vector-effect="non-scaling-stroke"/>
<rect x="442" y="445" width="7" height="7" fill="#fff"/>
<rect x="447" y="459" width="7" height="7" fill="#fff"/>
<rect x="442" y="473" width="7" height="7" fill="#fff"/>
<rect x="447" y="487" width="7" height="7" fill="#fff"/>
<rect x="455" y="445" width="7" height="7" fill="#fff"/>
<rect x="460" y="459" width="7" height="7" fill="#fff"/>
<rect x="455" y="473" width="7" height="7" fill="#fff"/>
<rect x="460" y="487" width="7" height="7" fill="#fff"/>
<rect x="468" y="445" width="7" height="7" fill="#fff"/>
<rect x="473" y="459" width="7" height="7" fill="#fff"/>
<rect x="468" y="473" width="7" height="7" fill="#fff"/>
<rect x="473" y="487" width="7" height="7" fill="#fff"/>
<rect x="481" y="445" width="7" height="7" fill="#fff"/>
<rect x="486" y="459" width="7" height="7" fill="#fff"/>
<rect x="481" y="473" width="7" height="7" fill="#fff"/>
<rect x="486" y="487" width="7" height="7" fill="#fff"/>
<rect x="555" y="442" width="50" height="52" fill="#5a5a5a" stroke="#999" stroke-width="1.5"/>
<path class="sk" d="M617 442H668V495H617Z" />
<path class="sm" d="M370 468H765" stroke-dasharray="4 1.5" style="stroke-width:1.3"/>
<path class="sm" d="M700 460V474M693 468H712" />
<path class="sm" d="M738 165H800V350M738 225H800M738 290H800M738 165V350" />
<path class="sm" d="M765 230V380" stroke-dasharray="4 1.5" style="stroke-width:1.3"/>
<path class="sm" d="M738 498V630H800V498M738 565H800" />
<path class="sm" d="M765 468V560" stroke-dasharray="4 1.5" style="stroke-width:1.3"/>
<path class="sm" d="M738 130V165" />
<path class="sm" d="M308 498V685H370V498M308 555H370M308 620H370" />
<path class="sm" d="M295 545V690H622" />
<path class="sm" d="M85 545H300" />
<path class="sm" d="M50 520V640" />
<path class="sg" d="M50 545H20V560" />
<path class="sm" d="M405 500V612H560" stroke-dasharray="9 2 1 2" style="stroke-width:1.3"/>
<path class="sm" d="M835 130V655" />
<path class="sm" d="M622 628H655V700H622Z" />
<path class="sm" d="M655 655H838" />
<path class="sk" d="M845 655V720" />
<path class="sm" d="M655 640H738V630" />
<path class="slg" d="M660 160A75 75 0 0 0 735 225" stroke-dasharray="3 1.5"/>
<path class="slg" d="M735 160V225" stroke-dasharray="3 1.5"/>
<path class="slg" d="M665 630A70 70 0 0 1 735 565" stroke-dasharray="3 1.5"/>
<path class="slg" d="M735 565V630" stroke-dasharray="3 1.5"/>
<path class="sm" d="M345 250V290" />
</g>
<text class="sr" x="735.0" y="408.2" text-anchor="middle" >COZINHA</text>
<text class="sr" x="735.0" y="415.0" text-anchor="middle" >11.2m2</text>
<text class="sr" x="735.0" y="485.8" text-anchor="middle" >COZINHA</text>
<text class="sr" x="735.0" y="492.5" text-anchor="middle" >10.1m2</text>
<text class="sr" x="792.0" y="391.2" text-anchor="middle" style="fill:#333">DESP</text>
<text class="sr" x="792.0" y="492.0" text-anchor="middle" style="fill:#333">DESP</text>
<text class="sb" x="680.5" y="483.0" text-anchor="start" style="font-size:6px">F</text>
<text class="sb" x="679.0" y="503.8" text-anchor="start" style="font-size:6px">FH</text>
<text class="sr" x="685.0" y="492.0" text-anchor="middle" style="font-size:3.4px;fill:#888">MICRO</text>
<text class="sd" x="718.5" y="407.5" text-anchor="middle" transform="rotate(-90 718.5 407.5)" >2.40</text>
<text class="sd" x="718.5" y="477.5" text-anchor="middle" transform="rotate(-90 718.5 477.5)" >2.40</text>
<text class="sd" x="740.0" y="462.5" text-anchor="middle" >3.50</text>
<text class="sd" x="683.8" y="462.5" text-anchor="middle" >0.60</text>
<text class="sd" x="793.8" y="462.5" text-anchor="middle" >0.60</text>
<text class="sd" x="805.0" y="457.0" text-anchor="middle" >0.30</text>
<text class="sd" x="650.0" y="462.5" text-anchor="middle" >1.65</text>
<text class="sd" x="675.0" y="462.5" text-anchor="middle" >0.28</text>
<text class="sd" x="724.2" y="518.0" text-anchor="middle" >2.40</text>
<text class="sd" x="774.2" y="518.0" text-anchor="middle" >0.75</text>
<text class="sd" x="796.2" y="518.0" text-anchor="middle" >0.92</text>
<text class="sd" x="767.0" y="512.5" text-anchor="middle" transform="rotate(-90 767.0 512.5)" >0.23</text>
<text class="sr" x="775.0" y="438.0" text-anchor="middle" style="font-size:3.6px;fill:#333">MLR</text>
<text class="sr" x="775.0" y="459.0" text-anchor="middle" style="font-size:3.6px;fill:#333">ML</text>
<path class="sm" d="M407.5 622.5V630M448.75 622.5V630" />
<path class="sk" d="M407.5 626.4L448.75 626.4" />
<path class="sk" d="M407.5 628.8L448.75 628.8" />
<path class="sm" d="M409.0 622.5V605M447.25 622.5V605" stroke-dasharray="4 2"/>
<path class="slg" d="M409.0 605A18.125 18.125 0 0 1 427.125 621.5M447.25 605A18.125 18.125 0 0 0 429.125 621.5" stroke-dasharray="3 1.5"/>
<path class="sm" d="M513.75 622.5V630M555 622.5V630" />
<path class="sk" d="M513.75 626.4L555 626.4" />
<path class="sk" d="M513.75 628.8L555 628.8" />
<path class="sm" d="M515.25 622.5V605M553.5 622.5V605" stroke-dasharray="4 2"/>
<path class="slg" d="M515.25 605A18.125 18.125 0 0 1 533.375 621.5M553.5 605A18.125 18.125 0 0 0 535.375 621.5" stroke-dasharray="3 1.5"/>
<g transform="translate(360 500) scale(0.25)">
<path class="sm" d="M108 80V490H190M355 490H615M780 490H915V120H665V135H690" />
<path class="sm" d="M80 520H510" />
<path class="sk" d="M510 520V635H930V425" />
<path class="sm" d="M510 520H935V395" />
<path class="sk" d="M425 135V490M500 135V490M565 135V490" />
<path class="sm" d="M490 135V490" />
<path class="sm" d="M425 135V100H440V120H578V135H425" />
<path class="sm" d="M690 135V200H895V135H690" />
<path class="sk" d="M690 200H895" />
<path class="sm" d="M715 120V90H735V120" />
<path class="sg" d="M580 137L628 190M584 134L632 187" />
<path class="slg" d="M628 190A70 70 0 0 0 655 140" stroke-dasharray="3 1.5"/>
<path class="sg" d="M425 100L362 48M428 96L365 44" />
<path class="slg" d="M345 45A85 85 0 0 0 420 100" />
<path class="sg" d="M715 90L652 38M718 86L655 34" />
<path class="slg" d="M640 35A85 85 0 0 0 712 90" />
<path class="sk" d="M935 407H1220M935 415H1220" />
<path class="sm" d="M930 425H1280" />
<path class="sk" d="M930 635H1280" />
<path class="sm" d="M1185 425V650" stroke-dasharray="18 4 1 4"/>
<path class="sm" d="M1220 325V410" stroke-dasharray="4 2"/>
<path class="slg" d="M1135 405A85 85 0 0 1 1220 325" stroke-dasharray="3 1.5"/>
<path class="sm" d="M1040 392H1058" />
</g>
<text class="sr" x="427.0" y="594.5" text-anchor="middle" >QUARTO</text>
<text class="sr" x="427.0" y="601.0" text-anchor="middle" >15.6m2</text>
<text class="sr" x="545.5" y="594.5" text-anchor="middle" >QUARTO</text>
<text class="sr" x="545.5" y="601.0" text-anchor="middle" >12.4m2</text>
<text class="sr" x="532.5" y="639.2" text-anchor="middle" >VARANDA</text>
<text class="sr" x="532.5" y="645.8" text-anchor="middle" >4.3m2</text>
<text class="sr" x="636.2" y="639.2" text-anchor="middle" >VARANDA</text>
<text class="sr" x="636.2" y="645.8" text-anchor="middle" >6.4m2</text>
<text class="sd" x="427.0" y="574.2" text-anchor="middle" >3.00</text>
<text class="sd" x="474.2" y="574.2" text-anchor="middle" >0.60</text>
<text class="sd" x="493.8" y="574.2" text-anchor="middle" >0.60</text>
<text class="sd" x="543.0" y="574.2" text-anchor="middle" >3.12</text>
<text class="sd" x="586.2" y="574.2" text-anchor="middle" >0.15</text>
<text class="sd" x="672.0" y="574.2" text-anchor="middle" >6.35</text>
<text class="sd" x="487.5" y="568.8" text-anchor="middle" style="font-size:5px">0.15</text>
<text class="sd" x="410.0" y="562.0" text-anchor="middle" transform="rotate(-90 410.0 562.0)" >4.80</text>
<text class="sd" x="563.0" y="586.2" text-anchor="middle" transform="rotate(-90 563.0 586.2)" >2.74</text>
<text class="sd" x="514.5" y="580.0" text-anchor="middle" transform="rotate(-90 514.5 580.0)" >3.65</text>
<text class="sd" x="563.0" y="541.2" text-anchor="middle" transform="rotate(-90 563.0 541.2)" >0.60</text>
<text class="sd" x="514.5" y="530.0" text-anchor="middle" transform="rotate(-90 514.5 530.0)" >0.15</text>
<text class="sd" x="563.0" y="625.0" text-anchor="middle" transform="rotate(-90 563.0 625.0)" >0.30</text>
<text class="sd" x="563.0" y="643.8" text-anchor="middle" transform="rotate(-90 563.0 643.8)" >1.10</text>
<text class="sd" x="618.8" y="636.2" text-anchor="middle" transform="rotate(-90 618.8 636.2)" >2.00</text>
<text class="sd" x="618.8" y="537.5" text-anchor="middle" transform="rotate(-90 618.8 537.5)" >4.64</text>
<text class="sd" x="618.8" y="602.5" text-anchor="middle" transform="rotate(-90 618.8 602.5)" >0.10</text>
<text class="sb" x="642.5" y="535.5" text-anchor="start" style="font-size:7px">2º,3º,4º,5º A</text>
<text class="sb" x="640.5" y="544.5" text-anchor="start" style="font-size:7.5px">FRÇ E/G/I/K</text>
<g transform="translate(600 500) scale(0.25)">
<path class="sm" d="M655 85H838V495H655Z" />
<path class="sk" d="M845 15V528" />
<path class="sx" d="M637 68V350" />
<path class="sm" d="M622 350H655M622 350V490" />
<path class="sm" d="M360 85H640" />
<path class="sm" d="M370 85V93" />
<path class="sk" d="M548 70H625" stroke-dasharray="4 2"/>
<path class="slg" d="M548 73A80 80 0 0 0 628 155" stroke-dasharray="3 1.5"/>
<path class="sm" d="M310 520H840M418 520V530H845" />
<path class="sm" d="M262 425V395H340V490H622" />
<path class="sk" d="M310 425V635" />
<path class="sk" d="M0 635H310" />
<path class="sm" d="M0 425H310" />
<path class="sk" d="M0 407H262M0 415H262" />
<path class="sm" d="M262 580V700" />
<path class="sm" d="M740 78V90" />
</g>
<text class="sr" x="735.0" y="597.5" text-anchor="middle" >SALA</text>
<text class="sr" x="735.0" y="604.2" text-anchor="middle" >26.3m2</text>
<text class="sr" x="786.2" y="559.2" text-anchor="middle" >VARANDA</text>
<text class="sr" x="786.2" y="566.0" text-anchor="middle" >8.1m2</text>
<text class="sd" x="787.5" y="574.2" text-anchor="middle" >1.80</text>
<text class="sd" x="759.2" y="574.2" text-anchor="middle" >0.16</text>
<text class="sd" x="719.5" y="567.0" text-anchor="middle" transform="rotate(-90 719.5 567.0)" >4.17</text>
<text class="sd" x="719.5" y="626.2" text-anchor="middle" transform="rotate(-90 719.5 626.2)" >0.30</text>
</g></svg>
<!--/PLAN-->
<div id="sbtrack" class="abs"></div>
<div id="sbthumb" class="abs"></div>
<div id="rpanel" class="abs"></div>
<div id="ltools" class="abs"></div>
<div id="titlebar" class="abs"></div>
<div id="tab" class="abs"></div>
<div id="toolbar" class="abs"></div>
<div id="taskbar" class="abs"></div>
<div id="start" class="abs"></div>
<div id="search" class="abs"></div>
<!--CHROME-->
<div class="abs" style="left:314px;top:6px;width:61px;height:23px;border:1px solid #8a8a8a;border-radius:5px;box-sizing:border-box;"></div>
<div class="abs" style="left:1109px;top:40px;width:155px;height:30px;border-radius:15px;background:linear-gradient(90deg,#ff6b57 0%,#e4647a 25%,#b56bb0 52%,#7a6ce6 78%,#5f6cf8 100%);"></div>
<div class="abs" style="left:1243px;top:427px;width:29px;height:28px;background:#1d1d1d;border:1px solid #5a5a5a;border-radius:4px;box-sizing:border-box;"></div>
<div class="t" style="left:35.5px;top:11.2px;font-size:12.5px;color:#dcdcdc;font-weight:normal;transform:scaleX(0.879);transform-origin:0 0;">Menu</div>
<div class="t" style="left:147px;top:10.6px;font-size:14px;color:#f0f0f0;font-weight:normal;transform:scaleX(0.964);transform-origin:0 0;">LOTE 9 - projecto.pdf</div>
<div class="t" style="left:342.5px;top:10.5px;font-size:12.5px;color:#e2e2e2;font-weight:normal;transform:scaleX(0.904);transform-origin:0 0;">Criar</div>
<div class="t" style="left:1028px;top:8.5px;font-size:16px;color:#f4f4f4;font-weight:normal;transform:scaleX(1.030);transform-origin:0 0;">Fazer logon</div>
<div class="t" style="left:14px;top:48.7px;font-size:13.6px;color:#e6e6e6;font-weight:normal;transform:scaleX(0.979);transform-origin:0 0;">Todas as ferramentas</div>
<div class="t" style="left:165px;top:48.7px;font-size:13.6px;color:#e6e6e6;font-weight:normal;transform:scaleX(0.957);transform-origin:0 0;">Editar</div>
<div class="t" style="left:222px;top:48.7px;font-size:13.6px;color:#e6e6e6;font-weight:normal;transform:scaleX(0.988);transform-origin:0 0;">Converter</div>
<div class="t" style="left:303px;top:48.7px;font-size:13.6px;color:#e6e6e6;font-weight:normal;transform:scaleX(0.981);transform-origin:0 0;">Assinar eletronicamente</div>
<div class="t" style="left:635px;top:48.7px;font-size:13.6px;color:#e6e6e6;font-weight:normal;transform:scaleX(0.973);transform-origin:0 0;">Localizar texto ou ferramentas</div>
<div class="t" style="left:1144px;top:48px;font-size:13.6px;color:#fff;font-weight:bold;transform:scaleX(0.997);transform-origin:0 0;">Assistente de IA</div>
<div class="t" style="left:1253.5px;top:434px;font-size:13px;color:#e6e6e6;font-weight:normal;transform:scaleX(0.968);transform-origin:0 0;">7</div>
<div class="t" style="left:1250px;top:466px;font-size:13px;color:#e6e6e6;font-weight:normal;transform:scaleX(1.037);transform-origin:0 0;">16</div>
<div class="t" style="left:71.5px;top:698.5px;font-size:14.5px;color:#d6d6d6;font-weight:normal;transform:scaleX(0.872);transform-origin:0 0;">Pesquisa</div>
<div class="t" style="left:1245.5px;top:700px;font-size:12px;color:#fff;font-weight:normal;transform:scaleX(0.882);transform-origin:0 0;">15:17</div>
<!--ICONS-->
<svg width="1280" height="77" viewBox="0 0 1280 77" style="position:absolute;left:0;top:0" fill="none" stroke="#dcdcdc" stroke-width="1.5" stroke-linecap="round" stroke-linejoin="round">
<!-- hamburger -->
<path d="M15.5 12.5H27.5M15.5 17.5H27.5M15.5 22.5H27.5" stroke-linecap="butt" stroke-width="1.6"/>
<!-- home -->
<path d="M87 17.2L94.5 10.5L102 17.2M89.3 15.8V23H93V19.3H96V23H99.7V15.8" stroke="#f2f2f2" stroke-width="1.6"/>
<!-- star -->
<path d="M131.8 10.6L134 15.3L139 15.9L135.3 19.4L136.3 24.3L131.8 21.8L127.3 24.3L128.3 19.4L124.6 15.9L129.6 15.3Z" stroke="#f2f2f2" stroke-width="1.6"/>
<!-- tab close -->
<path d="M291.3 14L298.7 21.6M298.7 14L291.3 21.6" stroke="#e8e8e8" stroke-width="1.6"/>
<!-- plus -->
<path d="M327.7 13V22.4M323 17.7H332.4" stroke="#e8e8e8" stroke-width="1.5"/>
<!-- help -->
<circle cx="937.4" cy="17" r="6.8" stroke="#e0e0e0"/>
<path d="M935.5 15.3A2 2 0 1 1 937.6 17.3V18.4" stroke="#e0e0e0" stroke-width="1.4"/><circle cx="937.6" cy="20.6" r=".9" fill="#e0e0e0" stroke="none"/>
<!-- bell -->
<path d="M962 21.5H974C972.6 20 972.3 18.5 972.3 16.3C972.3 13 970.6 11 968 11C965.4 11 963.7 13 963.7 16.3C963.7 18.5 963.4 20 962 21.5ZM966.6 23.5A1.5 1.5 0 0 0 969.4 23.5" stroke="#4f4f4f"/>
<!-- apps grid -->
<g fill="#bdbdbd" stroke="none"><circle cx="993" cy="12.8" r="1.7"/><circle cx="997.8" cy="12.8" r="1.7"/><circle cx="993" cy="17.6" r="1.7"/><circle cx="997.8" cy="17.6" r="1.7"/><circle cx="1002.6" cy="17.6" r="1.7"/><circle cx="993" cy="22.4" r="1.7"/><circle cx="997.8" cy="22.4" r="1.7"/><circle cx="1002.6" cy="22.4" r="1.7"/></g>
<circle cx="1003" cy="12.4" r="3.2" fill="#3a8ee6" stroke="none"/>
<!-- window controls -->
<path d="M1159 16H1172" stroke="#e6e6e6" stroke-width="1.6" stroke-linecap="butt"/>
<path d="M1208.5 12V10H1217.5V19H1215.5" stroke="#bdbdbd" stroke-width="1.3"/><rect x="1206.5" y="12" width="9" height="9" rx="1" stroke="#bdbdbd" stroke-width="1.3"/>
<path d="M1252.5 10L1263 20.5M1263 10L1252.5 20.5" stroke="#d8d8d8" stroke-width="1.3"/>
<!-- search -->
<circle cx="827" cy="53" r="5.2" stroke="#e0e0e0" stroke-width="1.6"/><path d="M830.8 57L836.5 62.6" stroke="#e0e0e0" stroke-width="1.6"/>
<path d="M855.5 48V62.5M982.5 48V62.5" stroke="#585858" stroke-width="1" stroke-linecap="butt"/>
<!-- save (dim) -->
<path d="M872.8 49H883.5L886.5 52V61.5H872.8ZM876.3 49V53.3H882.3V49M876 61.5V57H883.3V61.5" stroke="#666" stroke-width="1.4"/>
<!-- cloud upload -->
<path d="M915.5 59.3C912.6 59.3 911.3 57.4 911.3 55.6C911.3 53.6 912.8 52.2 914.6 52.1C915 49.6 917 48.2 919.3 48.2C921.6 48.2 923.3 49.5 923.9 51.6C926 51.7 927.4 53.3 927.4 55.3C927.4 57.6 925.7 59.3 923 59.3" stroke="#e6e6e6" stroke-width="1.5"/>
<path d="M919.3 63V54.5M916.3 57.2L919.3 54.2L922.3 57.2" stroke="#e6e6e6" stroke-width="1.5"/>
<!-- printer -->
<path d="M953.5 51V48.3H964.5V51M953.5 59.5H951V51.2H967V59.5H964.5M953.5 55.5H964.5V62.3H953.5ZM956.5 58.8H961.5" stroke="#e6e6e6" stroke-width="1.5"/>
<!-- user plus -->
<path d="M1012.8 57A7.5 7.5 0 1 0 1007 61.6" stroke="#e0e0e0" stroke-width="1.4"/><circle cx="1005.8" cy="52" r="2.7" stroke="#e0e0e0" stroke-width="1.4"/><path d="M1001.3 59.6C1001.8 57 1003.6 56.3 1005.8 56.3C1007 56.3 1008 56.5 1008.7 57" stroke="#e0e0e0" stroke-width="1.4"/>
<path d="M1011.3 56.5V63M1008 59.8H1014.6" stroke="#e0e0e0" stroke-width="1.5"/>
<!-- link -->
<g transform="rotate(-45 1045.5 55.5)" stroke="#e6e6e6" stroke-width="1.6"><path d="M1043.2 52.700H1039.800A2.800 2.800 0 0 0 1039.800 58.300H1044.200A2.800 2.800 0 0 0 1046.800 56.500"/><path d="M1047.800 58.300H1051.200A2.800 2.800 0 0 0 1051.200 52.700H1046.800A2.800 2.800 0 0 0 1044.200 54.500"/></g>
<!-- mail -->
<rect x="1077.5" y="49" width="14.5" height="11.5" rx="1" stroke="#e6e6e6" stroke-width="1.5"/><path d="M1078 49.5L1084.7 55.2L1091.5 49.5M1078 60L1082.7 55M1091.5 60L1086.8 55" stroke="#e6e6e6" stroke-width="1.3"/>
<!-- AI icon -->
<path d="M1129.5 48.5H1122.5Q1121 48.5 1121 50V57.5Q1121 59 1122.5 59H1123.5V62L1127 59H1132Q1133.5 59 1133.5 57.5V55" stroke="#fff" stroke-width="1.4"/>
<path d="M1134 46L1135 49L1138 50L1135 51L1134 54L1133 51L1130 50L1133 49Z" fill="#fff" stroke="none"/><path d="M1127 52.5L1127.7 54.3L1129.5 55L1127.7 55.7L1127 57.5L1126.3 55.7L1124.5 55L1126.3 54.3Z" fill="#fff" stroke="none"/>
</svg>
<!--ICONS2-->
<svg width="1280" height="720" viewBox="0 0 1280 720" style="position:absolute;left:0;top:0" fill="none" stroke="#dcdcdc" stroke-width="1.5" stroke-linecap="round" stroke-linejoin="round">
<!-- left tool panel -->
<rect x="15" y="303" width="30" height="3" rx="1.5" fill="#6a6a6a" stroke="none"/>
<rect x="15" y="314" width="30" height="30" rx="3" fill="#1473e6" stroke="none"/>
<path d="M26 321.5V336L29.3 332.7L31.7 337.8L33.6 336.9L31.3 332H35.8Z" fill="#fff" stroke="none"/>
<g fill="#e0e0e0" stroke="none"><path d="M41.5 336V340H37.5Z" fill="#fff"/><path d="M41 373V377H37Z"/><path d="M41 410V414H37Z"/><path d="M41 447V451H37Z"/><path d="M41 484.5V488.5H37Z"/><path d="M41 522V526H37Z"/></g>
<path d="M29.5 359.5A7 7 0 1 0 29.5 373.5H36.5V366.5A7 7 0 0 0 29.5 359.5ZM26.3 364.3H32.7M26.3 367.3H31" stroke-width="1.4"/>
<path d="M25.5 407L34 397.5Q35.5 396.3 36.8 397.6Q38 399 36.8 400.4L28.3 409.6ZM25.5 407L23 411.3L28.3 409.6" stroke-width="1.4"/><path d="M30 411.5H37.5" stroke="#8a8a8a" stroke-width="2.2"/>
<path d="M34.5 446.5C30 448 22.5 447 22.5 442C22.5 437.5 27 434.8 31 434.8C34.5 434.8 36.5 436.5 36.5 438.5C36.5 441.5 31.5 442.5 29 441.5" stroke-width="1.5"/>
<path d="M21.5 470.5H38M21.5 486.5H38M21.5 470.5V486.5M38 470.5V486.5" stroke-dasharray="2.2 1.6" stroke-linecap="butt" stroke-width="1.5"/><path d="M26.3 483.5L29.7 473.5L33.2 483.5M27.6 480.3H32" stroke-width="1.4"/>
<path d="M23.5 523.5L22.3 517L28 509.5L33.8 514L28.5 522ZM23.5 523.5L28 517.5M29.5 508.5L31 507Q32 506.3 33 507L36 509.5Q36.8 510.5 36 511.5L35 513" stroke-width="1.3"/><path d="M30.5 523.5C32 521.5 33 524.5 34.5 522.5S36.5 523.5 37.5 522.5" stroke-width="1.1"/>
<g fill="#d8d8d8" stroke="none"><circle cx="24" cy="553.5" r="1.1"/><circle cx="29.5" cy="553.5" r="1.1"/><circle cx="35" cy="553.5" r="1.1"/></g>
<!-- scrollbar arrows -->
<path d="M1223 89L1226.5 85.5L1230 89" stroke="#8a8a8a" stroke-width="1.6"/><path d="M1223 682L1226.5 685.5L1230 682" stroke="#8a8a8a" stroke-width="1.6"/>
<!-- right panel -->
<g stroke="#b9b3f4" stroke-width="1.4"><path d="M1259 95.5H1251.5Q1250 95.5 1250 97V106Q1250 107.5 1251.500 107.500H1262.500Q1264 107.500 1264 106V101.500"/><path d="M1253 99.300H1256.500M1253 101.800H1258M1253 104.300H1256.500"/><path d="M1263.300 92.500L1264.200 95L1266.700 96L1264.200 97L1263.300 99.500L1262.400 97L1259.900 96L1262.400 95Z" fill="#b9b3f4" stroke="none"/><circle cx="1258.500" cy="101.800" r="1" fill="#b9b3f4" stroke="none"/></g>
<path d="M1247 122.500H1269M1242 556.500H1272" stroke="#4a4a4a" stroke-width="1" stroke-linecap="butt"/>
<path d="M1258.500 135.500A6 6 0 0 0 1258.500 147.500H1264.500V141.500A6 6 0 0 0 1258.500 135.500ZM1256 140H1261.500M1256 142.700H1260" stroke-width="1.300"/><path d="M1252.500 139.500A6.300 6.300 0 0 0 1256.500 150.300H1262" stroke-width="1.300"/>
<path d="M1250.500 171H1258.500V186L1254.500 182.800L1250.500 186ZM1261.500 174.500H1265.500M1261.500 177.500H1265.500M1261.500 180.500H1265.500" stroke-width="1.400"/>
<path d="M1254.500 210.500H1260.500L1264.300 214.300V223H1254.500ZM1260.500 210.500V214.300H1264.300M1252 219.500H1251V208H1258" stroke-width="1.400"/>
<path d="M1252.500 510.500L1257.500 506L1262.500 510.500M1252.500 537.500L1257.500 542L1262.500 537.500" stroke="#f0f0f0" stroke-width="1.900"/>
<path d="M1264.500 575A6.700 6.700 0 1 1 1261.500 569.400M1259 569.200H1263.500V565" stroke-width="1.500"/>
<path d="M1253 601.500H1259.500L1263.500 605.500V615H1253ZM1256 612L1260.500 607.500M1260.500 610.500V607.500H1257.500M1256 609.300V612H1258.700" stroke-width="1.300"/><path d="M1269 615V619H1265Z" fill="#ddd" stroke="none"/>
<circle cx="1256.300" cy="640.500" r="5.300"/><path d="M1260.300 644.500L1265 649.200M1253.700 640.500H1259M1256.300 637.900V643.100"/>
<circle cx="1256.300" cy="674" r="5.300"/><path d="M1260.300 678L1265 682.700M1253.700 674H1259"/>
<!-- taskbar: start + search -->
<g fill="#fff" stroke="none"><path d="M9 700.200L15.200 699.300V705.200H9ZM16.200 699.150L24 698V705.200H16.200ZM9 706.200H15.200V712.100L9 711.200ZM16.200 706.200H24V713.400L16.200 712.250Z"/></g>
<circle cx="54.500" cy="703.800" r="4.600" stroke="#d0d0d0" stroke-width="1.300"/><path d="M51.300 707.300L45.800 712.800" stroke="#d0d0d0" stroke-width="1.300"/>
<!-- tray -->
<path d="M1155.500 708.500L1160 704L1164.500 708.500" stroke="#fff" stroke-width="1.300"/>
<rect x="1177" y="702.500" width="11" height="7" rx="1" stroke="#fff" stroke-width="1.100"/><path d="M1189.500 704.500V707.500M1175 700V704M1173.500 703.500H1176.500V706H1173.500Z" stroke="#fff" stroke-width="1.100"/>
<path d="M1204 698.500C1206.500 699.800 1209 700 1211 700V706C1211 709.500 1207.500 712 1204 713.500C1200.500 712 1197 709.500 1197 706V700C1199 700 1201.500 699.800 1204 698.500Z" fill="#fff" stroke="none"/><path d="M1204 699V713M1197.500 705.500H1210.500" stroke="#14233a" stroke-width="1.200"/><circle cx="1209" cy="711" r="3.300" fill="#2da44e" stroke="none"/>
<path d="M1224.500 712.500A9 9 0 0 1 1233.500 703.500M1227.500 712.500A6 6 0 0 1 1233.500 706.500M1230.500 712.500A3 3 0 0 1 1233.500 709.500" stroke="#d0d0d0" stroke-width="1.200"/><circle cx="1233" cy="712" r="1" fill="#fff" stroke="none"/>
<path d="M1276.500 694V718" stroke="#8a96a6" stroke-width="1" stroke-linecap="butt"/>
</svg>
<!--TB-->
<svg width="1280" height="28" viewBox="0 692 1280 28" style="position:absolute;left:0;top:692px" fill="none">
<rect x="798" y="692" width="34" height="28" fill="#44525c"/>
<g fill="#76b9ed"><rect x="282.500" y="718" width="25" height="2"/><rect x="351.500" y="718" width="26" height="2"/><rect x="420.500" y="718" width="26" height="2"/><rect x="455" y="718" width="26" height="2"/><rect x="559.500" y="718" width="26" height="2"/><rect x="663.500" y="718" width="26" height="2"/><rect x="732.500" y="718" width="26" height="2"/><rect x="767" y="718" width="26" height="2"/><rect x="798" y="718" width="34" height="2"/></g>
<!-- folder -->
<path d="M287 699H293L294.500 700.500H303V712H287Z" fill="#f2c04a"/><path d="M287 703H303V712H287Z" fill="#f7d774"/><rect x="291" y="707" width="8" height="5" fill="#5a9bd8"/>
<!-- chrome x3 -->
<g id="chr"><circle cx="330" cy="705" r="8" fill="#db4437"/><path d="M330 705L323.070 709A8 8 0 0 0 334 711.930Z" fill="#0f9d58"/><path d="M330 705L334 711.930A8 8 0 0 0 337.730 703H330Z" fill="#ffcd40"/><path d="M330 705L326 698.100" stroke="#db4437"/><path d="M323.070 709A8 8 0 0 1 323.100 701L327 706.800Z" fill="#0f9d58"/><circle cx="330" cy="705" r="3.700" fill="#fff"/><circle cx="330" cy="705" r="2.900" fill="#4285f4"/><circle cx="335" cy="710.500" r="3.200" fill="#3a3026"/></g>
<use href="#chr" x="34.500"/><use href="#chr" x="69"/>
<!-- outlook -->
<rect x="430" y="698" width="12" height="14" rx="1" fill="#28a8ea"/><rect x="436" y="701" width="6" height="8" fill="#50d9ff"/><rect x="425.500" y="700.500" width="10" height="10" rx="1" fill="#0f6cbd"/><circle cx="430.500" cy="705.500" r="2.600" stroke="#fff" stroke-width="1.400"/>
<!-- word -->
<rect x="464" y="698" width="13" height="14" rx="1" fill="#41a5ee"/><rect x="464" y="705" width="13" height="7" fill="#185abd"/><rect x="460" y="700.500" width="10" height="10" rx="1" fill="#185abd"/><path d="M462.300 703L463.700 708L465 704.500L466.300 708L467.700 703" stroke="#fff" stroke-width="1"/>
<!-- scanner -->
<rect x="496" y="697.500" width="15.500" height="15.500" rx="2" fill="#4a55c8"/><path d="M499 701.500L503.700 707L508.500 701.500Z" fill="#fff"/><rect x="498.500" y="708" width="10.500" height="2.500" fill="#fff"/>
<!-- CS -->
<rect x="530" y="697" width="16" height="16" rx="2" fill="#12202a"/><path d="M532.500 710.500H543.500" stroke="#27c08a" stroke-width="1.600"/>
<text x="538" y="707.500" font-family="Liberation Sans,sans-serif" font-size="8" font-weight="bold" fill="#fff" text-anchor="middle">CS</text>
<!-- calculator -->
<rect x="566.500" y="697" width="12" height="16.500" rx="1" fill="#7f8c92"/><rect x="568" y="698.500" width="9" height="3.500" fill="#cfd8dc"/><g fill="#dfe6e9"><rect x="568" y="703.500" width="2.300" height="2.300"/><rect x="571.300" y="703.500" width="2.300" height="2.300"/><rect x="574.600" y="703.500" width="2.300" height="2.300"/><rect x="568" y="706.800" width="2.300" height="2.300"/><rect x="571.300" y="706.800" width="2.300" height="2.300"/><rect x="574.600" y="706.800" width="2.300" height="5.500"/><rect x="568" y="710.100" width="2.300" height="2.300"/><rect x="571.300" y="710.100" width="2.300" height="2.300"/></g>
<!-- clapper -->
<path d="M600 703H615.500V712.500H600Z" fill="#a855e8"/><path d="M600 701.500L614.500 698L615.300 700.800L600.600 704.300Z" fill="#c48af5"/><rect x="600" y="706" width="15.500" height="3" fill="#8a3ed4"/>
<!-- diamond play -->
<path d="M641.500 696.500L650 705L641.500 713.500L633 705Z" fill="#5d50d6"/><path d="M639.500 701.500L645.500 705L639.500 708.500Z" fill="#fff"/>
<!-- whatsapp -->
<circle cx="676.500" cy="704.800" r="7.300" stroke="#25d366" stroke-width="1.800"/><path d="M670 713L671.300 708.800L674 711.500Z" fill="#25d366"/><path d="M673.500 702C673.500 705 676 708 679.500 708L680.300 706.300L678.500 705.300L677.700 706C676.700 705.600 675.800 704.600 675.500 703.700L676.200 703L675.300 701.200Z" fill="#25d366"/>
<!-- teams -->
<circle cx="716" cy="700.500" r="2.500" fill="#7b83eb"/><rect x="712" y="703.500" width="8" height="8" rx="2" fill="#5059c9"/><circle cx="709.500" cy="699.800" r="2.800" fill="#7b83eb"/><rect x="703.500" y="701.500" width="10" height="10" rx="1.500" fill="#4b53bc"/><path d="M706 704H711M708.500 704V709.500" stroke="#fff" stroke-width="1.300"/>
<!-- spotify -->
<circle cx="745.500" cy="705" r="8" fill="#1ed760"/><path d="M740.800 702.300C744 701.300 748 701.600 750.500 703M741.300 705.200C744 704.400 747.300 704.700 749.700 706M741.800 707.900C744 707.300 746.600 707.500 748.600 708.600" stroke="#12202a" stroke-width="1.300" stroke-linecap="round"/>
<!-- photos -->
<rect x="772" y="697.500" width="16" height="15.500" rx="2" fill="#2b88d8"/><path d="M772 711L777.500 704.500L782 709.500L784.500 707L788 710.500V713H772Z" fill="#9bd3f7"/><circle cx="783.500" cy="701.500" r="1.700" fill="#fff"/>
<!-- acrobat -->
<rect x="807" y="697" width="16" height="16" rx="2.500" fill="#b30b00"/><path d="M810 710.500C812.500 708.500 814.500 704 814.700 700.500C814.800 699.300 813.300 699.300 813.400 700.600C813.800 704 816.500 707.300 820 708C821.300 708.200 821.300 706.800 820 706.700C816.500 706.500 812.500 708 810 710.500Z" stroke="#fff" stroke-width="1.100" stroke-linejoin="round"/>
</svg>
<!--/ICONS-->

</div>
</body>
</html>
